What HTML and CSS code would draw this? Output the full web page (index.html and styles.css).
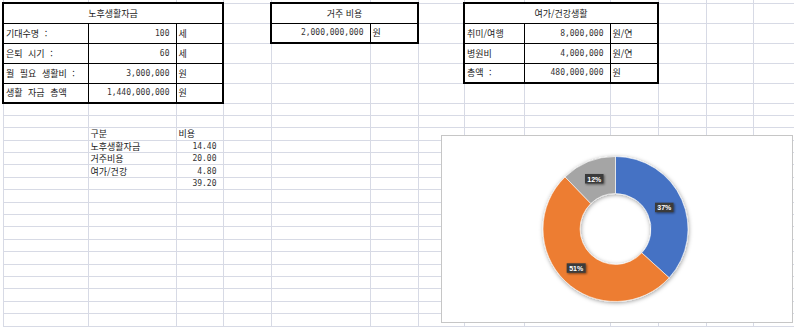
FILE: index.html
```html
<!DOCTYPE html>
<html lang="ko">
<head>
<meta charset="utf-8">
<title>노후자금 계산</title>
<link rel="stylesheet" href="styles.css">
</head>
<body>
<table class="sheet">
<colgroup>
<col class="w85"><col class="w88"><col class="w47"><col class="w48"><col class="w99"><col class="w48"><col class="w46"><col class="w60"><col class="w86"><col class="w48"><col class="w48"><col class="w47"><col class="w48">
</colgroup>
<tr class="h3 r0"><td></td><td></td><td></td><td></td><td></td><td></td><td></td><td></td><td></td><td></td><td></td><td></td><td></td></tr>
<tr class="h20">
<td colspan="3" class="k hd bt bl br">노후생활자금</td><td></td>
<td colspan="2" class="k hd bt bl br">거주 비용</td><td></td>
<td colspan="3" class="k hd bt bl br">여가/건강생활</td><td></td><td></td><td></td>
</tr>
<tr class="h20">
<td class="k lb bl">기대수명 :</td><td class="k n">100</td><td class="k u br">세</td><td></td>
<td class="k n bl bb">2,000,000,000</td><td class="k u br bb">원</td><td></td>
<td class="k lb bl">취미/여행</td><td class="k n">8,000,000</td><td class="k u br">원/연</td><td></td><td></td><td></td>
</tr>
<tr class="h20">
<td class="k lb bl">은퇴 시기 :</td><td class="k n">60</td><td class="k u br">세</td><td></td>
<td></td><td></td><td></td>
<td class="k lb bl">병원비</td><td class="k n">4,000,000</td><td class="k u br">원/연</td><td></td><td></td><td></td>
</tr>
<tr class="h20">
<td class="k lb bl">월 필요 생활비 :</td><td class="k n">3,000,000</td><td class="k u br">원</td><td></td>
<td></td><td></td><td></td>
<td class="k lb bl bb">총액 :</td><td class="k n bb">480,000,000</td><td class="k u br bb">원</td><td></td><td></td><td></td>
</tr>
<tr class="h20">
<td class="k lb bl bb">생활 자금 총액</td><td class="k n bb">1,440,000,000</td><td class="k u br bb">원</td>
<td></td><td></td><td></td><td></td><td></td><td></td><td></td><td></td><td></td><td></td>
</tr>
<tr class="h12"><td></td><td></td><td></td><td></td><td></td><td></td><td></td><td></td><td></td><td></td><td></td><td></td><td></td></tr>
<tr class="h12"><td></td><td></td><td></td><td></td><td></td><td></td><td></td><td></td><td></td><td></td><td></td><td></td><td></td></tr>
<tr class="h12"><td></td><td class="lb">구분</td><td class="lb">비용</td><td></td><td></td><td></td><td></td><td></td><td></td><td></td><td></td><td></td><td></td></tr>
<tr class="h12"><td></td><td class="lb">노후생활자금</td><td class="n">14.40</td><td></td><td></td><td></td><td></td><td></td><td></td><td></td><td></td><td></td><td></td></tr>
<tr class="h12"><td></td><td class="lb">거주비용</td><td class="n">20.00</td><td></td><td></td><td></td><td></td><td></td><td></td><td></td><td></td><td></td><td></td></tr>
<tr class="h12"><td></td><td class="lb">여가/건강</td><td class="n">4.80</td><td></td><td></td><td></td><td></td><td></td><td></td><td></td><td></td><td></td><td></td></tr>
<tr class="h12"><td></td><td></td><td class="n">39.20</td><td></td><td></td><td></td><td></td><td></td><td></td><td></td><td></td><td></td><td></td></tr>
<tr class="h12"><td></td><td></td><td></td><td></td><td></td><td></td><td></td><td></td><td></td><td></td><td></td><td></td><td></td></tr>
<tr class="h12"><td></td><td></td><td></td><td></td><td></td><td></td><td></td><td></td><td></td><td></td><td></td><td></td><td></td></tr>
<tr class="h12"><td></td><td></td><td></td><td></td><td></td><td></td><td></td><td></td><td></td><td></td><td></td><td></td><td></td></tr>
<tr class="h12"><td></td><td></td><td></td><td></td><td></td><td></td><td></td><td></td><td></td><td></td><td></td><td></td><td></td></tr>
<tr class="h12"><td></td><td></td><td></td><td></td><td></td><td></td><td></td><td></td><td></td><td></td><td></td><td></td><td></td></tr>
<tr class="h12"><td></td><td></td><td></td><td></td><td></td><td></td><td></td><td></td><td></td><td></td><td></td><td></td><td></td></tr>
<tr class="h12"><td></td><td></td><td></td><td></td><td></td><td></td><td></td><td></td><td></td><td></td><td></td><td></td><td></td></tr>
<tr class="h12"><td></td><td></td><td></td><td></td><td></td><td></td><td></td><td></td><td></td><td></td><td></td><td></td><td></td></tr>
<tr class="h12"><td></td><td></td><td></td><td></td><td></td><td></td><td></td><td></td><td></td><td></td><td></td><td></td><td></td></tr>
<tr class="h12"><td></td><td></td><td></td><td></td><td></td><td></td><td></td><td></td><td></td><td></td><td></td><td></td><td></td></tr>
<tr class="h12"><td></td><td></td><td></td><td></td><td></td><td></td><td></td><td></td><td></td><td></td><td></td><td></td><td></td></tr>
</table>

<div class="chart">
<svg class="donut" width="350" height="186" viewBox="0 0 350 186">
<defs>
<filter id="sh" x="-20%" y="-20%" width="140%" height="140%">
<feDropShadow dx="0.5" dy="1" stdDeviation="2.2" flood-color="#000" flood-opacity="0.4"/>
</filter>
<filter id="ls" x="-30%" y="-30%" width="160%" height="160%">
<feDropShadow dx="1" dy="1" stdDeviation="0.8" flood-color="#000" flood-opacity="0.5"/>
</filter>
</defs>
<g filter="url(#sh)">
<path fill="#4472c4" stroke="#fff" stroke-width="0.6" d="M173.5 20.5 A72.5 72.5 0 0 1 227.16 141.75 L199.78 116.87 A35.5 35.5 0 0 0 173.5 57.5 Z"/>
<path fill="#ed7d31" stroke="#fff" stroke-width="0.6" d="M227.16 141.75 A72.5 72.5 0 1 1 123.06 40.92 L148.8 67.5 A35.5 35.5 0 1 0 199.78 116.87 Z"/>
<path fill="#a5a5a5" stroke="#fff" stroke-width="0.6" d="M123.06 40.92 A72.5 72.5 0 0 1 173.5 20.5 L173.5 57.5 A35.5 35.5 0 0 0 148.8 67.5 Z"/>
</g>
<g class="lbls">
<rect x="143" y="38" width="18.5" height="9.5" fill="#3b3b3b" filter="url(#ls)"/>
<text x="152.25" y="45.6">12%</text>
<rect x="213" y="66.7" width="18.5" height="9.5" fill="#3b3b3b" filter="url(#ls)"/>
<text x="222.25" y="74.3">37%</text>
<rect x="124.7" y="127.3" width="19" height="9.5" fill="#3b3b3b" filter="url(#ls)"/>
<text x="134.2" y="134.9">51%</text>
</g>
</svg>
</div>
</body>
</html>
```

FILE: styles.css
```css
html, body {
  margin: 0;
  padding: 0;
  background: #fff;
}
body {
  width: 794px;
  height: 330px;
  overflow: hidden;
  position: relative;
  font-family: "Noto Sans CJK KR", "Noto Sans", sans-serif;
  color: #1a1a1a;
}
.sheet {
  border-collapse: collapse;
  table-layout: fixed;
  width: 798px;
  margin-left: 2px;
}
.w85 { width: 85px; }
.w88 { width: 88px; }
.w47 { width: 47px; }
.w48 { width: 48px; }
.w99 { width: 99px; }
.w46 { width: 46px; }
.w60 { width: 60px; }
.w86 { width: 86px; }
.sheet td {
  border: 1px solid #d7dae5;
  padding: 0 2px;
  font-size: 9px;
  line-height: 11px;
  white-space: nowrap;
  overflow: hidden;
  vertical-align: middle;
}
.sheet .r0 td { border-top: none; }
.h3 { height: 3px; }
.h20 { height: 20px; }
.h12 { height: 12.4px; }
.sheet td.k { border: 1px solid #000; }
.sheet td.bt { border-top: 2px solid #000; }
.sheet td.bb { border-bottom: 2px solid #000; }
.sheet td.bl { border-left: 2px solid #000; }
.sheet td.br { border-right: 2px solid #000; }
.hd { text-align: center; }
.lb { padding-left: 3px; word-spacing: 3px; }
.u { padding-left: 2px; }
.sheet td.n {
  text-align: right;
  padding-right: 6px;
  font-family: "DejaVu Sans Mono", monospace;
  font-size: 8px;
  color: #333;
}
.chart {
  position: absolute;
  left: 441px;
  top: 135px;
  width: 352px;
  height: 188px;
  box-sizing: border-box;
  border: 1px solid #c6c6c6;
  background: #fff;
}
.donut { display: block; }
.lbls text {
  font-family: "Liberation Sans", Arial, sans-serif;
  font-size: 7px;
  font-weight: bold;
  fill: #fff;
  text-anchor: middle;
}
```
